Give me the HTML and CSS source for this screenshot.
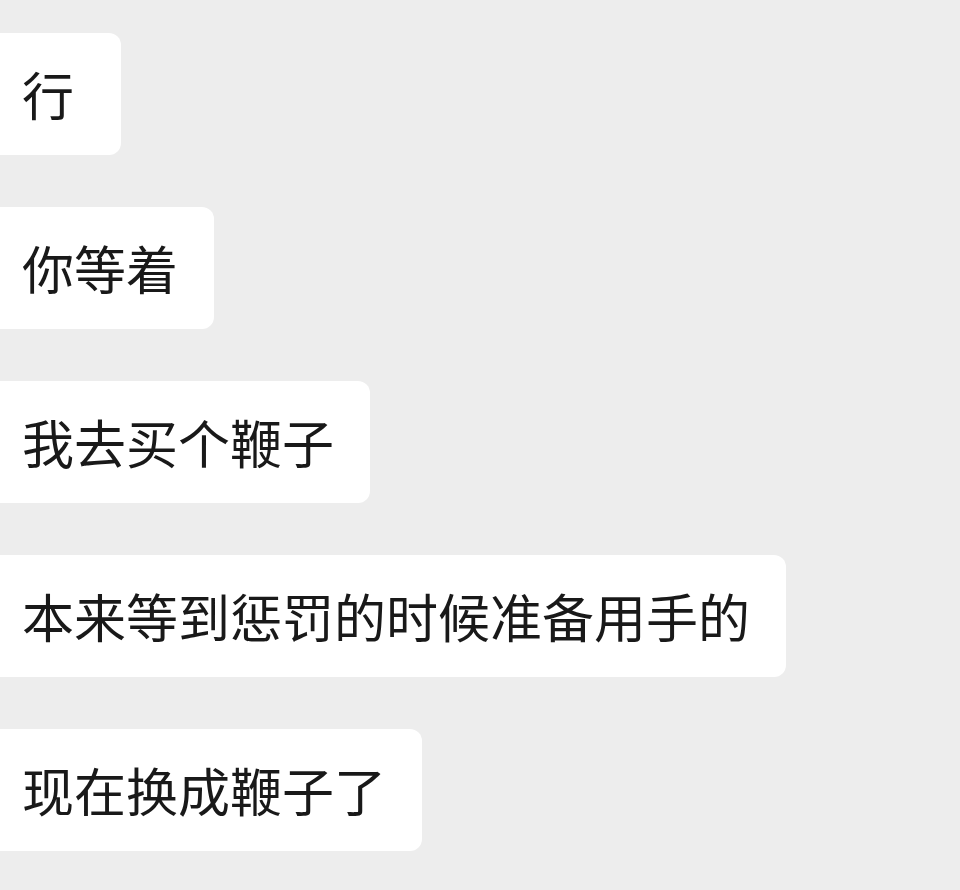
FILE: index.html
```html
<!DOCTYPE html>
<html>

<head>
  <title>聊天</title>
  <meta charset="UTF-8">
  <link rel="stylesheet" href="styles.css">
</head>

<body>
  <div class="chatList">
    <div class="msgRow"><div class="bubble short">行</div></div>
    <div class="msgRow"><div class="bubble">你等着</div></div>
    <div class="msgRow"><div class="bubble">我去买个鞭子</div></div>
    <div class="msgRow"><div class="bubble">本来等到惩罚的时候准备用手的</div></div>
    <div class="msgRow"><div class="bubble">现在换成鞭子了</div></div>
  </div>
</body>

</html>
```

FILE: styles.css
```css
body {
  margin: 0;
  background-color: #ededed;
  font-family: "Noto Sans CJK SC", "Noto Sans", sans-serif;
  color: #191919;
}

.chatList {
  display: flex;
  flex-direction: column;
  gap: 52px;
  padding-top: 33px;
  overflow: hidden;
}

.msgRow {
  display: flex;
}

/* bubbles run off the left edge a little */
.bubble {
  margin-left: -14px;
  padding: 26px 36px;
  line-height: 70px;
  height: 70px;
  font-size: 52px;
  background-color: #ffffff;
  border-radius: 12px;
  white-space: nowrap;
}

.bubble.short {
  min-width: 63px;
}
```
